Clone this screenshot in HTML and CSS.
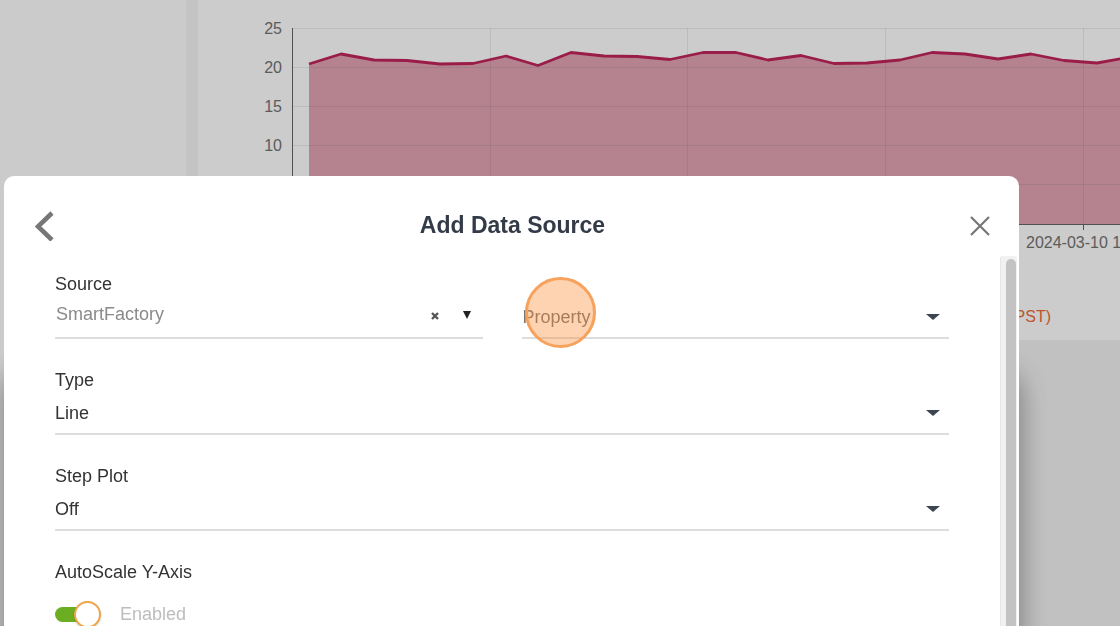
FILE: index.html
```html
<!DOCTYPE html>
<html lang="en">
<head>
    <meta charset="UTF-8">
    <meta name="viewport" content="width=device-width, initial-scale=1.0">
    <title>SmartFactory - Add Data Source</title>
    <link rel="stylesheet" href="styles.css">
</head>

<body>
<div class="app">
    <aside class="sidebar">
        <span class="sidebar-note">Timezone:</span>
    </aside>
    <div class="divider"></div>
    <main class="main">
        <section class="chart-panel">
            <svg class="chart" width="922" height="340" viewBox="198 0 922 340">
                <polygon class="area" points="309,224 309,64 341,54 374,60 407,60.5 440,64 473,63.5 506,56 538,65.5 571,52.5 604,56 637,56.5 670,59.5 703,52.5 736,52.5 768,60 801,55.5 834,63.5 867,63 900,60 932,52.5 965,54 998,59 1031,54 1064,60.5 1097,63 1130,57 1130,224"/>
                <g class="grid">
                    <line x1="292" y1="28.5" x2="1120" y2="28.5"/>
                    <line x1="292" y1="67.5" x2="1120" y2="67.5"/>
                    <line x1="292" y1="106.5" x2="1120" y2="106.5"/>
                    <line x1="292" y1="145.5" x2="1120" y2="145.5"/>
                    <line x1="292" y1="184.5" x2="1120" y2="184.5"/>
                    <line x1="490.5" y1="28" x2="490.5" y2="224"/>
                    <line x1="687.5" y1="28" x2="687.5" y2="224"/>
                    <line x1="885.5" y1="28" x2="885.5" y2="224"/>
                    <line x1="1083.5" y1="28" x2="1083.5" y2="224"/>
                </g>
                <polyline class="series" points="309,64 341,54 374,60 407,60.5 440,64 473,63.5 506,56 538,65.5 571,52.5 604,56 637,56.5 670,59.5 703,52.5 736,52.5 768,60 801,55.5 834,63.5 867,63 900,60 932,52.5 965,54 998,59 1031,54 1064,60.5 1097,63 1130,57"/>
                <line class="axis" x1="292.5" y1="28" x2="292.5" y2="224"/>
                <line class="axis" x1="292" y1="224.5" x2="1120" y2="224.5"/>
                <line class="axis" x1="1083.5" y1="224" x2="1083.5" y2="230"/>
                <g class="tick-label">
                    <text x="282" y="34">25</text>
                    <text x="282" y="73">20</text>
                    <text x="282" y="112">15</text>
                    <text x="282" y="151">10</text>
                    <text x="282" y="190">5</text>
                </g>
                <text class="x-label" x="1026" y="248">2024-03-10 12:00</text>
                <text class="axis-title" x="1051" y="322">Time (PST)</text>
            </svg>
        </section>
        <section class="lower-panel"></section>
    </main>
</div>

<div class="backdrop"></div>

<div class="dialog">
    <div class="dialog-header">
        <button class="icon-button back-button" type="button">
            <svg width="20" height="32" viewBox="0 0 20 32">
                <polyline points="17,4 3,17.5 17,31" fill="none" stroke="#777" stroke-width="4.6"/>
            </svg>
        </button>
        <h2 class="dialog-title">Add Data Source</h2>
        <button class="icon-button close-button" type="button">
            <svg width="20" height="20" viewBox="0 0 20 20">
                <path d="M1 1 L19 19 M19 1 L1 19" stroke="#777" stroke-width="2.2"/>
            </svg>
        </button>
    </div>

    <div class="dialog-content">
        <div class="dialog-body">
            <div class="field-row">
                <div class="field">
                    <label class="field-label">Source</label>
                    <div class="select autocomplete">
                        <span class="select-value muted">SmartFactory</span>
                        <svg class="clear-icon" width="8" height="8" viewBox="0 0 8 8">
                            <path d="M1 1 L7 7 M7 1 L1 7" stroke="#555" stroke-width="2.4"/>
                        </svg>
                        <span class="arrow-solid"></span>
                    </div>
                </div>
                <div class="field">
                    <label class="field-label">&nbsp;</label>
                    <div class="select">
                        <span class="select-value placeholder">Property</span>
                        <span class="caret"></span>
                        <span class="click-marker"></span>
                    </div>
                </div>
            </div>

            <div class="field">
                <label class="field-label">Type</label>
                <div class="select">
                    <span class="select-value">Line</span>
                    <span class="caret"></span>
                </div>
            </div>

            <div class="field">
                <label class="field-label">Step Plot</label>
                <div class="select">
                    <span class="select-value">Off</span>
                    <span class="caret"></span>
                </div>
            </div>

            <div class="field">
                <label class="field-label">AutoScale Y-Axis</label>
                <div class="toggle-row">
                    <div class="toggle">
                        <div class="toggle-track"></div>
                        <div class="toggle-knob"></div>
                    </div>
                    <span class="toggle-text">Enabled</span>
                </div>
            </div>

            <div class="field">
                <label class="field-label">Y-Axis Min</label>
                <div class="select">
                    <span class="select-value">0</span>
                </div>
            </div>

            <div class="field">
                <label class="field-label">Y-Axis Max</label>
                <div class="select">
                    <span class="select-value">100</span>
                </div>
            </div>
        </div>
        <div class="scrollbar">
            <div class="scrollbar-thumb"></div>
        </div>
    </div>
</div>
</body>
</html>
```

FILE: styles.css
```css
* {
    margin: 0;
    padding: 0;
    box-sizing: border-box;
    font-family: "Liberation Sans", Arial, Helvetica, sans-serif;
}

body {
    width: 1120px;
    height: 626px;
    overflow: hidden;
    background-color: #fff;
}

/* page behind the dialog */
.app {
    display: flex;
    height: 626px;
}

.sidebar {
    width: 186px;
    padding-top: 306px;
    overflow: hidden;
    background-color: #fefefe;
}

.sidebar-note {
    display: block;
    margin-left: -76px;
    font-size: 16px;
    color: #f06a38;
    white-space: nowrap;
}

.divider {
    width: 12px;
    background-color: #f5f5f5;
}

.main {
    flex: 1;
    display: flex;
    flex-direction: column;
}

.chart-panel {
    height: 340px;
    background-color: #fff;
}

.chart {
    display: block;
}

.chart .area {
    fill: #e2a4b3;
}

.chart .grid line {
    stroke: rgba(40, 60, 120, 0.1);
    stroke-width: 1;
}

.chart .series {
    fill: none;
    stroke: #c1245a;
    stroke-width: 2.8;
    stroke-linejoin: round;
}

.chart .axis {
    stroke: #666;
    stroke-width: 1;
}

.chart .tick-label text {
    font-size: 16px;
    fill: #737373;
    text-anchor: end;
}

.chart .x-label {
    font-size: 16px;
    fill: #737373;
}

.chart .axis-title {
    font-size: 16px;
    fill: #f06a38;
    text-anchor: end;
}

.lower-panel {
    flex: 1;
    background-color: #f2f2f2;
}

.backdrop {
    position: fixed;
    top: 0;
    left: 0;
    right: 0;
    bottom: 0;
    background-color: rgba(0, 0, 0, 0.2);
}

/* dialog */
.dialog {
    position: fixed;
    left: 4px;
    top: 176px;
    width: 1015px;
    height: 640px;
    display: flex;
    flex-direction: column;
    background-color: #fff;
    border-radius: 10px 10px 0 0;
    box-shadow: 0 200px 30px rgba(0, 0, 0, 0.4);
}

.dialog-header {
    display: grid;
    grid-template-columns: 1fr auto 1fr;
    align-items: center;
    height: 80px;
    padding: 29px 29px 11px 31px;
}

.icon-button {
    display: flex;
    align-items: center;
    border: none;
    background: none;
    cursor: pointer;
}

.back-button {
    justify-self: start;
}

.close-button {
    justify-self: end;
    margin-top: 2px;
}

.dialog-title {
    font-size: 23px;
    font-weight: bold;
    color: #333b48;
    line-height: 40px;
}

.dialog-content {
    flex: 1;
    display: flex;
    min-height: 0;
}

.dialog-body {
    flex: 1;
    overflow: hidden;
    padding: 17px 51px 40px 51px;
}

.scrollbar {
    width: 17px;
    margin-right: 2px;
    padding: 3px 1px 0 5px;
    background-color: #f1f1f1;
    border-left: 1px solid #e6e6e6;
    border-radius: 3px 3px 0 0;
}

.scrollbar-thumb {
    height: 420px;
    border-radius: 6px;
    background-color: #c3c3c3;
}

/* form */
.field-row {
    display: grid;
    grid-template-columns: 1fr 1fr;
    column-gap: 39px;
}

.field {
    margin-bottom: 30px;
}

.field-label {
    display: block;
    font-size: 18px;
    line-height: 22px;
    color: #333;
}

.select {
    position: relative;
    display: flex;
    align-items: center;
    height: 44px;
    padding-top: 2px;
    border-bottom: 2px solid #ddd;
    font-size: 18px;
    color: #333;
}

.select.autocomplete {
    padding-top: 0;
    padding-bottom: 4px;
}

.select-value {
    flex: 1;
}

.select-value.muted {
    padding-left: 1px;
    color: #8a8a8a;
}

.select-value.placeholder {
    padding-left: 1px;
    color: #757575;
}

.clear-icon {
    margin-right: 24px;
    margin-top: 3px;
}

.arrow-solid {
    width: 0;
    height: 0;
    margin-top: 2px;
    margin-right: 12px;
    border-left: 4.5px solid transparent;
    border-right: 4.5px solid transparent;
    border-top: 8px solid #222;
}

.caret {
    width: 0;
    height: 0;
    margin-right: 9px;
    border-left: 7px solid transparent;
    border-right: 7px solid transparent;
    border-top: 6px solid #3c4550;
}

.click-marker {
    position: absolute;
    left: 3px;
    top: -18px;
    width: 71px;
    height: 71px;
    border-radius: 50%;
    background-color: rgba(250, 140, 50, 0.38);
    border: 3px solid #f6a15c;
}

.toggle-row {
    display: flex;
    align-items: center;
    gap: 19px;
    height: 26px;
    margin-top: 18px;
}

.toggle {
    position: relative;
    width: 46px;
    height: 26px;
}

.toggle-track {
    width: 32px;
    height: 15px;
    margin-top: 6px;
    border-radius: 8px;
    background-color: #6cae21;
}

.toggle-knob {
    position: absolute;
    right: 0;
    top: -0.5px;
    width: 27px;
    height: 27px;
    border-radius: 50%;
    background-color: #fff;
    border: 2px solid #f0a54a;
    box-shadow: 0 1px 2px rgba(0, 0, 0, 0.2);
}

.toggle-text {
    font-size: 18px;
    color: #bdbdbd;
}
```
